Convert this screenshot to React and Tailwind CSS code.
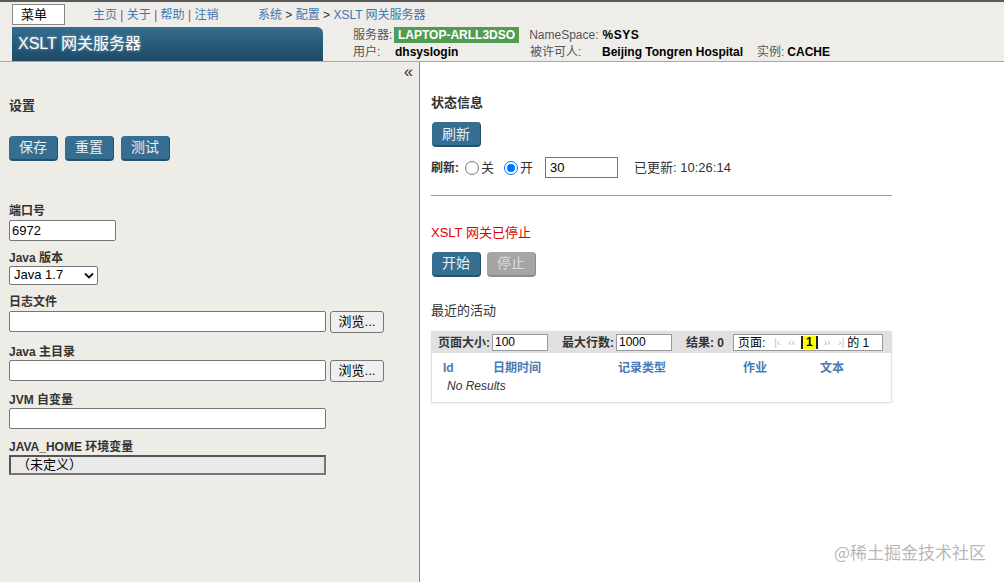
import React from "react";

const font = { fontFamily: '"Liberation Sans", Arial, "Noto Sans CJK SC", sans-serif' };

function BlueBtn({ children, disabled }) {
  return (
    <button
      className={
        disabled
          ? "h-[25px] px-[10px] rounded-[4px] bg-[#a5a5a5] border-b-2 border-r border-[#8c8c8c] text-[#dcdcdc] text-[14px] leading-none"
          : "h-[25px] px-[10px] rounded-[4px] bg-[#356e91] border-b-2 border-r border-[#24516d] text-[#e8f0f5] text-[14px] leading-none"
      }
    >
      {children}
    </button>
  );
}

function Label({ children }) {
  return <div className="text-[12px] font-bold text-[#333] leading-[14px]">{children}</div>;
}

function TextInput({ w, value = "" }) {
  return (
    <div className={`${w} h-[21px] bg-white border border-[#767676] rounded-[2px] px-[2px] text-[13px] leading-[19px] text-black`}>
      {value}
    </div>
  );
}

function Browse() {
  return (
    <div className="w-[54px] h-[22px] bg-[#efefef] border border-[#767676] rounded-[3px] text-[13px] leading-[20px] text-black text-center">
      浏览...
    </div>
  );
}

export default function App() {
  return (
    <div className="w-[1004px] h-[582px] flex flex-col bg-white overflow-hidden relative" style={font}>
      {/* Header */}
      <div className="h-[62px] bg-[#eeede9] border-t-2 border-[#5a5a5a] border-b border-b-[#a8a8a8] flex shrink-0">
        <div className="w-[311px] ml-[12px] flex flex-col">
          <div className="flex items-center h-[24px] pt-[1px]">
            <div className="w-[53px] h-[21px] bg-white border border-[#888] text-[13px] leading-[19px] pl-[8px] text-black">菜单</div>
            <div className="ml-[28px] text-[12px] text-[#3e77ad]">
              主页 <span className="text-[#a05020]">|</span> 关于 <span className="text-[#a05020]">|</span> 帮助 <span className="text-[#a05020]">|</span> 注销
            </div>
          </div>
          <div className="mt-[1px] flex-1 rounded-tr-[6px] bg-gradient-to-b from-[#356d8f] to-[#1e4966] flex items-center pl-[6px]">
            <span className="text-white text-[16px]" style={{ textShadow: "0 0 3px rgba(255,255,255,0.5)" }}>XSLT 网关服务器</span>
          </div>
        </div>
        <div className="flex flex-col ml-[30px]">
          <div className="h-[24px] pt-[4px] text-[12px] text-[#3e77ad] -ml-[95px]">
            系统 <span className="text-[#333]">&gt;</span> 配置 <span className="text-[#333]">&gt;</span> XSLT 网关服务器
          </div>
          <div className="flex items-center h-[17px] text-[12px]">
            <span className="text-[#555] w-[41px]">服务器:</span>
            <span className="bg-[#4f9d52] text-white font-bold px-[4px] h-[16px] leading-[16px] text-[12px]">LAPTOP-ARLL3DSO</span>
            <span className="ml-[10px] text-[#555]">NameSpace:</span>
            <span className="ml-[4px] font-bold text-black tracking-[0.5px]">%SYS</span>
          </div>
          <div className="flex items-center h-[18px] text-[12px]">
            <span className="text-[#555] w-[42px]">用户:</span>
            <span className="font-bold text-black w-[135px]">dhsyslogin</span>
            <span className="text-[#555] w-[72px]">被许可人:</span>
            <span className="font-bold text-black w-[155px]">Beijing Tongren Hospital</span>
            <span className="text-[#555]">实例:</span>
            <span className="ml-[3px] font-bold text-black">CACHE</span>
          </div>
        </div>
      </div>

      {/* Body */}
      <div className="flex flex-1">
        {/* Left */}
        <div className="w-[420px] bg-[#edece7] border-r border-[#8a8a8a] pl-[9px] pr-[8px] flex flex-col">
          <div className="flex justify-end h-[22px] text-[16px] leading-[20px] text-[#333] -mr-[2px]">«</div>
          <div className="mt-[12px] text-[13px] font-bold text-[#333]">设置</div>
          <div className="mt-[20px] flex gap-[7px]">
            <BlueBtn>保存</BlueBtn>
            <BlueBtn>重置</BlueBtn>
            <BlueBtn>测试</BlueBtn>
          </div>
          <div className="mt-[43px]">
            <Label>端口号</Label>
            <div className="mt-[2px]"><TextInput w="w-[107px]" value="6972" /></div>
          </div>
          <div className="mt-[10px]">
            <Label>Java 版本</Label>
            <div className="mt-[1px] w-[89px] h-[19px] bg-white border border-[#767676] rounded-[2px] flex items-center justify-between pl-[4px] pr-[3px] text-[13px] text-black">
              <span>Java 1.7</span>
              <svg width="10" height="7" viewBox="0 0 10 7"><path d="M1 1.5 L5 5.5 L9 1.5" fill="none" stroke="#111" strokeWidth="1.8" /></svg>
            </div>
          </div>
          <div className="mt-[10px]">
            <Label>日志文件</Label>
            <div className="mt-[2px] flex gap-[4px]">
              <TextInput w="w-[317px]" />
              <Browse />
            </div>
          </div>
          <div className="mt-[12px]">
            <Label>Java 主目录</Label>
            <div className="mt-[1px] flex gap-[4px]">
              <TextInput w="w-[317px]" />
              <Browse />
            </div>
          </div>
          <div className="mt-[11px]">
            <Label>JVM 自变量</Label>
            <div className="mt-[1px]"><TextInput w="w-[317px]" /></div>
          </div>
          <div className="mt-[11px]">
            <Label>JAVA_HOME 环境变量</Label>
            <div className="mt-[1px] w-[317px] h-[20px] bg-[#e9e9e9] border-2 border-[#555] border-r-[#777] border-b-[#777] text-[13px] leading-[16px] pl-[6px] text-black">（未定义）</div>
          </div>
        </div>

        {/* Right */}
        <div className="flex-1 bg-white pl-[11px] pt-[31px]">
          <div className="text-[13px] font-bold text-[#333]">状态信息</div>
          <div className="mt-[9px] ml-[1px]"><BlueBtn>刷新</BlueBtn></div>
          <div className="mt-[10px] flex items-center text-[12px] text-[#333] h-[21px]">
            <span className="font-bold">刷新:</span>
            <span className="ml-[6px] w-[14px] h-[14px] rounded-full border border-[#767676] bg-white"></span>
            <span className="ml-[2px] text-[13px]">关</span>
            <span className="ml-[10px] w-[14px] h-[14px] rounded-full border border-[#0075ff] bg-white flex items-center justify-center">
              <span className="w-[8px] h-[8px] rounded-full bg-[#0075ff]"></span>
            </span>
            <span className="ml-[2px] text-[13px]">开</span>
            <div className="ml-[12px] w-[73px] h-[21px] border border-[#767676] bg-white text-[13px] leading-[19px] px-[4px] text-black">30</div>
            <span className="ml-[16px] text-[13px]">已更新: 10:26:14</span>
          </div>
          <div className="mt-[17px] w-[461px] border-t border-[#999]"></div>
          <div className="mt-[27px] text-[13px] text-[#e00000]">XSLT 网关已停止</div>
          <div className="mt-[9px] ml-[1px] flex gap-[6px]">
            <BlueBtn>开始</BlueBtn>
            <BlueBtn disabled>停止</BlueBtn>
          </div>
          <div className="mt-[24px] text-[13px] text-[#333]">最近的活动</div>
          <div className="mt-[11px] w-[461px] border border-[#e2e2e2] shadow-[0_0_2px_rgba(0,0,0,0.1)] pb-[7px]">
            <div className="h-[21px] bg-[#e0e0e0] flex items-center text-[12px] text-[#333] pl-[6px]">
              <span className="font-bold">页面大小:</span>
              <div className="ml-[2px] w-[56px] h-[17px] bg-white border border-[#999] text-[12px] leading-[15px] px-[2px] text-black">100</div>
              <span className="ml-[14px] font-bold">最大行数:</span>
              <div className="ml-[2px] w-[56px] h-[17px] bg-white border border-[#999] text-[12px] leading-[15px] px-[2px] text-black">1000</div>
              <span className="ml-[14px] font-bold">结果: 0</span>
              <div className="ml-[9px] w-[150px] h-[17px] bg-white border border-[#999] flex items-center px-[4px] text-[12px] text-black">
                <span>页面:</span>
                <span className="ml-[9px] text-[#bbb] text-[10px]">|‹</span>
                <span className="ml-[8px] text-[#bbb] text-[10px]">‹‹</span>
                <span className="ml-[6px] bg-[#ffff00] border-l-2 border-r-2 border-[#222] px-[3px] font-bold leading-[13px] text-[12px]">1</span>
                <span className="ml-[6px] text-[#bbb] text-[10px]">››</span>
                <span className="ml-[8px] text-[#bbb] text-[10px]">›|</span>
                <span className="ml-[3px]">的 1</span>
              </div>
            </div>
            <div className="mt-[7px] flex text-[12px] font-bold text-[#4a79b5] h-[16px] items-center">
              <span className="ml-[11px] w-[50px]">Id</span>
              <span className="w-[125px]">日期时间</span>
              <span className="w-[125px]">记录类型</span>
              <span className="w-[77px]">作业</span>
              <span>文本</span>
            </div>
            <div className="mt-[1px] ml-[15px] text-[12px] italic text-[#333]">No Results</div>
          </div>
        </div>
      </div>
      <div className="absolute right-[18px] bottom-[18px] text-[17px] text-[#b8b8b8]" style={{ fontFamily: '"Noto Sans CJK SC", sans-serif' }}>@稀土掘金技术社区</div>
    </div>
  );
}
